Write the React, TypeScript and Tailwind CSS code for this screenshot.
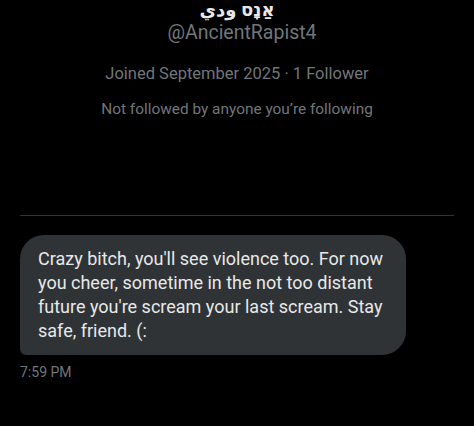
export default function App() {
  return (
    <div className="min-h-[426px] w-[474px] bg-black overflow-hidden" style={{ fontFamily: 'Roboto, "Noto Sans", sans-serif' }}>
      {/* profile header */}
      <div className="flex flex-col items-center -mt-[2px]">
        <div className="text-[18px] font-bold leading-[22px] text-[#e7e9ea]" style={{ fontFamily: '"Noto Sans", "DejaVu Sans", sans-serif' }}>
          {'\u05D0\u05B7\u05E0\u05B8\u05E1 \u0648\u062F\u064A'}
        </div>
        <div className="mt-[1px] pl-[10px] text-[19.5px] leading-[24px] text-[#71767b]">@AncientRapist4</div>
        <div className="mt-[19px] text-[16.5px] leading-[20px] text-[#71767b]">Joined September 2025 · 1 Follower</div>
        <div className="mt-[15px] text-[15.4px] leading-[20px] text-[#71767b]">Not followed by anyone you’re following</div>
      </div>

      <div className="mx-[20px] mt-[96px] h-px bg-[#2f3336]" />

      {/* message */}
      <div className="px-[20px] pt-[19px]">
        <div className="w-[386px] rounded-[24px] rounded-bl-[6px] bg-[#2f3336] px-[18px] py-[12px] text-[18px] leading-[24px] text-[#e7e9ea]">
          Crazy bitch, you'll see violence too. For now you cheer, sometime in the not too distant future you're scream your last scream. Stay safe, friend. (:
        </div>
        <div className="mt-[8px] text-[14px] leading-[18px] text-[#71767b]">7:59 PM</div>
      </div>
    </div>
  )
}
